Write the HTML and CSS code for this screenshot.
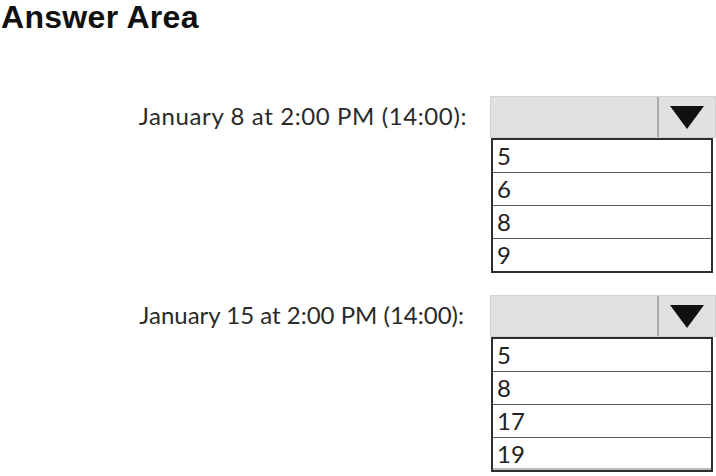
FILE: index.html
```html
<!DOCTYPE html>
<html>
  <head>
    <meta charset="UTF-8" />
    <title>Answer Area</title>
    <link rel="stylesheet" href="styles.css">
  </head>

  <body>
    <h1 class="titre">Answer Area</h1>

    <div class="ligne premiere">
      <div class="libelle">January 8 at 2:00 PM (14:00):</div>
      <div class="choix">
        <div class="entete">
          <div class="champ"></div>
          <div class="fleche">
            <svg width="34" height="23" viewBox="0 0 34 23"><polygon points="0,0 34,0 17,23" fill="#111" /></svg>
          </div>
        </div>
        <div class="liste">
          <div class="option">5</div>
          <div class="option">6</div>
          <div class="option">8</div>
          <div class="option">9</div>
        </div>
      </div>
    </div>

    <div class="ligne">
      <div class="libelle serre">January 15 at 2:00 PM (14:00):</div>
      <div class="choix">
        <div class="entete">
          <div class="champ"></div>
          <div class="fleche">
            <svg width="34" height="23" viewBox="0 0 34 23"><polygon points="0,0 34,0 17,23" fill="#111" /></svg>
          </div>
        </div>
        <div class="liste">
          <div class="option">5</div>
          <div class="option">8</div>
          <div class="option">17</div>
          <div class="option encadre">19</div>
        </div>
      </div>
    </div>
  </body>
</html>
```

FILE: styles.css
```css
body {
  margin: 0;
  background: #fff;
  color: #222;
  font-family: Lato, "Open Sans", sans-serif;
}

.titre {
  margin: 0;
  padding: 1px 0 0 1px;
  height: 35px;
  font: bold 32px "Liberation Sans", Arial, sans-serif;
  line-height: 33px;
  letter-spacing: 0.3px;
  color: #111;
}

.ligne {
  display: flex;
  align-items: flex-start;
}

.premiere {
  margin-top: 60px;
}

.ligne + .ligne {
  margin-top: 22px;
}

.libelle {
  width: 467px;
  text-align: right;
  font-size: 24px;
  letter-spacing: 0.6px;
  line-height: 40px;
  color: #2a2a2a;
}

.serre {
  width: 464px;
  padding-right: 3px;
  letter-spacing: 0;
}

.choix {
  margin-left: 23px;
  width: 226px;
}

.entete {
  display: flex;
  height: 42px;
  box-sizing: border-box;
  background: #e1e1e1;
  border: 1px solid #d2d2d2;
}

.champ {
  flex: 1;
}

.fleche {
  width: 56px;
  border-left: 2px solid #a9a9a9;
  display: flex;
  align-items: center;
  justify-content: center;
}

.liste {
  margin: 0 3px 0 1px;
  border: 2px solid #2e2e2e;
}

.option {
  height: 32px;
  padding-left: 4px;
  font-size: 24px;
  line-height: 32px;
  color: #222;
}

.option + .option {
  border-top: 1px solid #5a5a5a;
}

.encadre {
  box-shadow: inset 0 -2px 0 #bbb;
}
```
